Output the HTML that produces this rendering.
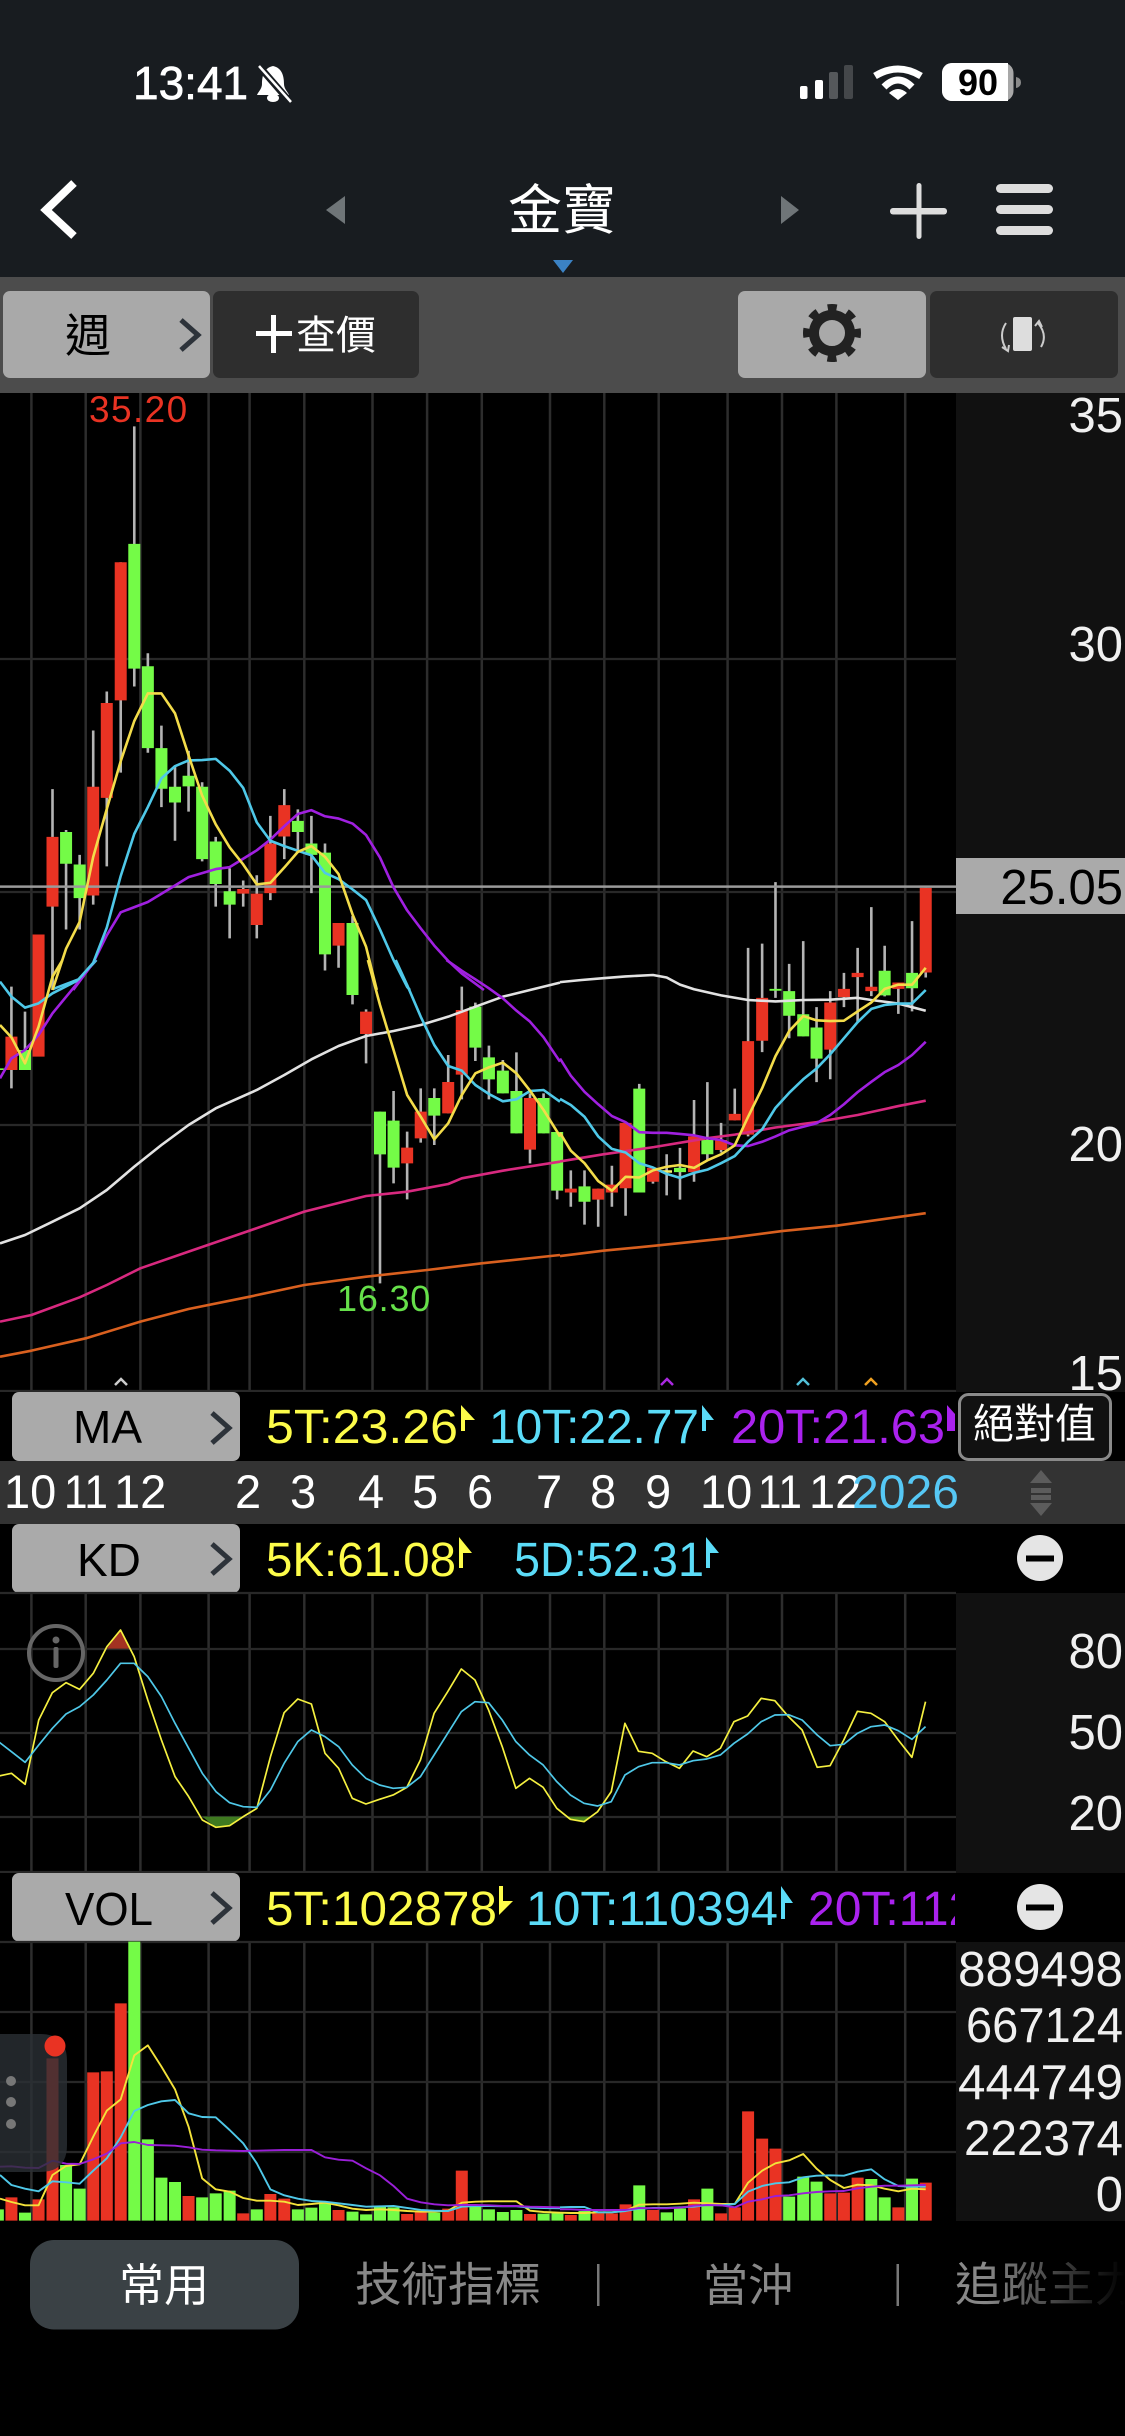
<!DOCTYPE html>
<html>
<head>
<meta charset="utf-8">
<title>金寶</title>
<style>
html,body{margin:0;padding:0;background:#000;width:1125px;height:2436px;overflow:hidden}
svg{display:block;font-family:"Liberation Sans","Noto Sans CJK TC",sans-serif}
path,polyline{vector-effect:non-scaling-stroke}
.l{fill:none;stroke-linejoin:round}
</style>
</head>
<body>
<svg width="1125" height="2436" viewBox="0 0 1125 2436" xmlns="http://www.w3.org/2000/svg">
<rect width="1125" height="2436" fill="#000"/>
<rect width="1125" height="277" fill="#181c20"/>
<rect y="277" width="1125" height="116" fill="#4c4c4c"/>

<!-- status bar -->
<text x="133" y="99" font-size="46" fill="#fff" stroke="#fff" stroke-width=".7">13:41</text>
<path d="M273 66C263 68 262 78 262 84C262 89 258 92 257 95H289C288 92 284 89 284 84C284 78 283 68 273 66Z" fill="#fff"/>
<ellipse cx="273" cy="98" rx="6" ry="4" fill="#fff"/>
<path d="M258 65L291 103" stroke="#181c20" stroke-width="7" fill="none"/>
<path d="M259 66L291 102" stroke="#fff" stroke-width="2.500" fill="none"/>
<rect x="800" y="86" width="7.500" height="13" rx="2" fill="#fff"/>
<rect x="815" y="80" width="8" height="19" rx="2" fill="#fff"/>
<rect x="829" y="72" width="9" height="27" rx="2" fill="#55585b"/>
<rect x="844" y="65" width="9" height="34" rx="2" fill="#44474a"/>
<path d="M875 76Q898 62 921 76M884 87Q898 73 912 87" fill="none" stroke="#fff" stroke-width="7"/>
<path d="M889 93Q898 85 907 93L898 100Z" fill="#fff"/>
<rect x="942" y="63" width="71.500" height="38" rx="10" fill="#a8a8a8"/>
<path d="M952 63H1008V101H952A10 10 0 0 1 942 91V73A10 10 0 0 1 952 63Z" fill="#fff"/>
<path d="M1016 77Q1021 78 1021 82.500Q1021 87 1016 88Z" fill="#8a8a8a"/>
<text x="958" y="95" font-size="36" font-weight="700" fill="#000">90</text>

<!-- nav bar -->
<path d="M74 183L46 210L74 236" fill="none" stroke="#fff" stroke-width="8"/>
<path d="M345 196V224L326 210Z" fill="#6f7578"/>
<path d="M781 196V224L799 210Z" fill="#6f7578"/>
<text x="508" y="229" font-size="54" fill="#fff">金寶</text>
<path d="M553 260H573L563 273Z" fill="#3b82c4"/>
<rect x="916.500" y="183" width="5" height="56" rx="2.500" fill="#ddd"/>
<rect x="890" y="208" width="57" height="6.500" rx="3" fill="#ddd"/>
<rect x="996" y="184" width="57" height="9" rx="4.500" fill="#ddd"/>
<rect x="996" y="205" width="57" height="9" rx="4.500" fill="#ddd"/>
<rect x="996" y="226" width="57" height="9" rx="4.500" fill="#ddd"/>

<!-- toolbar -->
<rect x="3" y="291" width="207" height="87" rx="7" fill="#a9a9a9"/>
<rect x="213" y="291" width="206" height="87" rx="7" fill="#2e2e2e"/>
<rect x="738" y="291" width="188" height="87" rx="7" fill="#a9a9a9"/>
<rect x="930" y="291" width="188" height="87" rx="7" fill="#2e2e2e"/>
<text x="65" y="352" font-size="46" fill="#000">週</text>
<path d="M181 320L198 335L181 350" fill="none" stroke="#2d333a" stroke-width="5"/>
<rect x="256" y="331" width="36" height="5" fill="#fff"/>
<rect x="271" y="315" width="5" height="38" fill="#fff"/>
<text x="296" y="349" font-size="40" fill="#fff">查價</text>
<circle cx="832" cy="333" r="18" fill="none" stroke="#222" stroke-width="10"/>
<circle cx="832" cy="333" r="25.500" fill="none" stroke="#222" stroke-width="7" stroke-dasharray="9 11.030" stroke-dashoffset="4.500"/>
<rect x="1013" y="317" width="19" height="34" rx="2" fill="#ddd"/>
<path d="M1006 323Q998 335 1006 349M1038 323Q1048 335 1041 347" fill="none" stroke="#ccc" stroke-width="2"/>
<path d="M1002 347L1008 351L1009 345M1035 326L1039 321L1042 327" fill="none" stroke="#ccc" stroke-width="2"/>

<!-- chart backgrounds -->
<rect y="393" width="956" height="1828" fill="#000"/>
<!-- vertical grid -->
<path d="M31.400 393V2221M85.700 393V2221M140.400 393V2221M208.600 393V2221M249.600 393V2221M304.300 393V2221M372.500 393V2221M427.100 393V2221M481.800 393V2221M550 393V2221M604.300 393V2221M658.700 393V2221M727.600 393V2221M782 393V2221M836.400 393V2221M905.200 393V2221" stroke="#2d2d2d" stroke-width="2.500" fill="none"/>
<!-- horizontal grid -->
<path d="M0 659H956M0 892H956M0 1125H956M0 1391H956M0 1649H956M0 1733H956M0 1817H956M0 2012H956M0 2082H956M0 2152H956" stroke="#282828" stroke-width="2.200" fill="none"/>

<!-- MAIN CHART: wicks -->
<g fill="none" stroke="#b4b4b4" stroke-width="2.600">
<g transform="translate(0 390) scale(.357143 .38265)"><path d="M147 1043V1568M185 1150V1410M223 1215V1410M261 890V1345M299 788V1245M338 450V1000M376 95V775M414 688V948M452 877V1090M490 985V1178M528 943V1102M566 1025V1232M604 1168V1350M643 1250V1433M681 1282V1350M719 1268V1433M757 1113V1333M796 1043V1226M834 1096V1210M872 1113V1315M910 1185V1517M948 1393V1510M987 1375V1568"/></g>
<g transform="translate(0 960) scale(.357143 .33333)"><path d="M32 80V385M70 155V330M147 0V70M987 0V133M1025 148V310M1064 455V970M1102 393V670M1140 515V718M1178 385V548M1216 385V555M1255 285V460M1293 80V418M1331 128V303M1369 257V418M1408 300V400M1446 277V520M1484 400V610M1522 400V520M1560 516V718"/></g>
<g transform="translate(560 840) scale(.36033 .35714)"><path d="M30 925V1027M68 925V1077M106 976V1083M144 912V1027M182 792V1052M220 683V987M258 918V962M296 880V995M333 862V1007M372 728V957M409 678V895M447 792V875M485 696V785M522 302V830M561 290V594M598 118V442M636 347V555M675 283V550M712 468V678M750 423V670M788 372V468M826 302V510M864 188V437M901 296V438M939 399V487M977 227V480M1015 134V385"/></g>
</g>
<!-- bodies green -->
<g fill="none" stroke="#74fb47" stroke-width="12">
<g transform="translate(0 390) scale(.357143 .38265)"><path d="M185 1155V1238M223 1240V1328M376 402V728M414 722V936M452 936V1042M490 1037V1078M528 1008V1036M566 1037V1226M604 1180V1291M643 1310V1345M834 1126V1155M872 1185V1215M910 1209V1475M987 1393V1568"/></g>
<g transform="translate(0 960) scale(.357143 .33333)"><path d="M-6 325V330M70 270V330M987 0V105M1064 455V583M1102 482V623M1216 414V467M1331 140V263M1369 292V358M1408 332V400M1446 393V520M1522 414V520M1560 516V692"/></g>
<g transform="translate(560 840) scale(.36033 .35714)"><path d="M68 970V1013M220 696V987M333 918V930M409 840V880M598 417V422M636 423V492M675 488V550M712 525V612M901 366V435M977 372V415"/></g>
</g>
<!-- bodies red -->
<g fill="none" stroke="#e93323" stroke-width="12">
<g transform="translate(0 390) scale(.357143 .38265)"><path d="M108 1423V1568M147 1168V1350M261 1037V1321M299 818V1066M338 450V811M681 1304V1316M719 1316V1398M757 1185V1315M796 1085V1167M948 1393V1452"/></g>
<g transform="translate(0 960) scale(.357143 .33333)"><path d="M32 230V330M108 0V290M1025 155V222M1140 563V610M1178 455V535M1255 366V460M1293 150V344M1484 414V569"/></g>
<g transform="translate(560 840) scale(.36033 .35714)"><path d="M30 976V987M106 976V1007M144 965V987M182 792V975M258 918V957M372 830V930M447 840V868M485 767V785M522 563V825M561 442V562M750 455V587M788 417V440M826 372V384M864 411V423M939 399V417M1015 134V371"/></g>
</g>
<path d="M661 1171.500H672" stroke="#f4f06a" stroke-width="2.500" fill="none"/>
<!-- price line -->
<path d="M0 886.600H956" stroke="#9a9a9a" stroke-width="2.500" fill="none"/>

<!-- MA lines -->
<g class="l" stroke-width="2.600">
<g transform="translate(0 960) scale(.357143 .33333)">
<path class="l" stroke="#d9601f" d="M0 1190 88 1172 240 1135 393 1085 528 1047 699 1010 852 975 1025 950 1196 930 1349 910 1568 885"/>
<path class="l" stroke="#d8297f" d="M0 1085 88 1065 223 1012 299 975 393 925 528 875 699 812 852 755 1025 708 1140 695 1255 672 1293 655 1408 632 1568 605"/>
<path class="l" stroke="#e2e2e2" d="M0 850 70 825 147 785 223 745 299 690 376 620 452 555 528 495 604 445 719 390 796 345 872 298 948 258 1025 228 1102 213 1178 195 1255 170 1331 140 1408 110 1484 90 1568 68"/>
<path class="l" stroke="#a020e0" d="M0 355 32 295 70 270 108 225 147 160 220 65 268 0M1250 0 1293 32 1331 58 1369 85 1408 115 1446 152 1484 185 1522 232 1568 305"/>
<path class="l" stroke="#4fc8e8" d="M0 65 32 110 70 143 108 130 147 100 220 60 270 0M1108 0 1140 75 1178 170 1216 255 1255 318 1293 332 1331 375 1369 402 1408 424 1446 418 1484 393 1522 390 1568 425"/>
<path class="l" stroke="#f3dc4a" d="M0 195 32 232 70 310 108 200 147 50 175 0M1030 0 1064 135 1102 270 1140 405 1178 470 1216 538 1255 490 1293 405 1331 340 1369 322 1408 308 1446 340 1484 392 1522 450 1560 515 1568 530"/>
</g>
<g transform="translate(0 390) scale(.357143 .38265)">
<path class="l" stroke="#a020e0" d="M205 1568 261 1497 299 1425 338 1365 414 1338 490 1295 528 1273 604 1252 643 1247 719 1203 757 1175 796 1140 834 1108 872 1098 910 1114 948 1120 987 1133 1025 1163 1064 1222 1102 1300 1140 1360 1178 1407 1216 1452 1255 1492 1293 1525 1355 1568"/>
<path class="l" stroke="#4fc8e8" d="M150 1565 220 1540 261 1497 299 1405 338 1270 376 1160 414 1090 452 1015 490 983 528 968 566 967 604 964 643 995 681 1040 719 1130 757 1178 796 1192 834 1204 872 1216 910 1262 948 1278 987 1305 1025 1333 1064 1410 1102 1490 1140 1560 1148 1568"/>
<path class="l" stroke="#f3dc4a" d="M147 1568 185 1460 223 1390 261 1220 299 1095 338 970 376 865 414 793 452 793 490 845 528 955 566 1060 604 1135 643 1195 681 1240 719 1292 757 1288 796 1248 834 1207 872 1192 910 1220 948 1265 987 1370 1025 1455 1055 1568"/>
</g>
<g transform="translate(560 840) scale(.36033 .35714)">
<path class="l" stroke="#d9601f" d="M0 1165 120 1150 274 1135 465 1115 616 1095 767 1080 958 1053 1015 1045"/>
<path class="l" stroke="#d8297f" d="M0 900 120 880 260 860 409 835 485 825 598 805 712 790 826 770 939 745 1015 730"/>
<path class="l" stroke="#e2e2e2" d="M0 398 60 392 120 387 182 382 258 378 296 385 333 405 372 418 447 435 522 448 598 452 675 448 750 447 826 442 864 448 939 458 1015 478"/>
<path class="l" stroke="#a020e0" d="M0 612 30 660 68 705 106 740 144 773 182 790 220 818 258 820 296 820 333 823 372 827 409 835 447 840 485 855 522 857 561 845 598 830 636 813 675 803 712 793 750 770 788 740 826 706 864 677 901 650 939 630 977 602 1015 565"/>
<path class="l" stroke="#4fc8e8" d="M0 725 30 742 68 775 106 830 144 865 182 875 220 905 258 917 296 935 333 946 372 932 409 923 447 905 485 885 522 845 561 810 598 750 636 708 675 670 712 640 750 600 788 555 826 510 864 473 901 462 939 458 977 458 1015 420"/>
<path class="l" stroke="#f3dc4a" d="M0 820 30 870 68 905 106 955 144 982 182 943 220 945 258 925 296 915 333 910 372 918 409 897 447 880 485 855 522 775 561 695 598 605 636 535 675 493 712 505 750 507 788 506 826 480 864 455 901 417 939 405 977 405 1015 358"/>
</g>
</g>
<text x="89" y="422" font-size="37" fill="#e93323" letter-spacing="1.400">35.20</text>
<text x="337" y="1311" font-size="36" fill="#66e04a" letter-spacing=".8">16.30</text>
<path d="M115 1385L121 1379L127 1385" fill="none" stroke="#ccc" stroke-width="2.500"/>
<path d="M661 1385L667 1379L673 1385" fill="none" stroke="#a828e0" stroke-width="2.500"/>
<path d="M797 1385L803 1379L809 1385" fill="none" stroke="#52c0d8" stroke-width="2.500"/>
<path d="M865 1385L871 1379L877 1385" fill="none" stroke="#f0a020" stroke-width="2.500"/>

<!-- right panel main -->
<rect x="956" y="393" width="169" height="999" fill="#111"/>
<rect x="956" y="858" width="169" height="56" fill="#aaa"/>
<g font-size="49" fill="#f0f0f0" text-anchor="end">
<text x="1123" y="432">35</text>
<text x="1123" y="661">30</text>
<text x="1123" y="1161">20</text>
<text x="1123" y="1390">15</text>
<text x="1123" y="904" fill="#000" font-size="49">25.05</text>
</g>

<!-- MA row -->
<rect y="1392" width="1125" height="69" fill="#000"/>
<rect x="12" y="1392" width="228" height="69" rx="7" fill="#aaa"/>
<text x="73" y="1443" font-size="46" fill="#000">MA</text>
<path d="M212 1413L229 1428L212 1443" fill="none" stroke="#2d333a" stroke-width="5"/>
<g font-size="48">
<text x="266" y="1443" fill="#fdfc4a" textLength="192" lengthAdjust="spacingAndGlyphs">5T:23.26</text>
<text x="489" y="1443" fill="#5bdcf8" textLength="210" lengthAdjust="spacingAndGlyphs">10T:22.77</text>
<text x="731" y="1443" fill="#aa22ee" textLength="214" lengthAdjust="spacingAndGlyphs">20T:21.63</text>
</g>
<path d="M461 1405L475 1420H465V1431H461Z" fill="#fdfc4a"/>
<path d="M702 1405L714 1420H706V1431H702Z" fill="#5bdcf8"/>
<path d="M947 1405L955 1414V1431H947Z" fill="#aa22ee"/>
<rect x="956" y="1392" width="169" height="69" fill="#000"/>
<rect x="959.500" y="1394.500" width="151" height="65" rx="9" fill="#111" stroke="#8a8a8a" stroke-width="3"/>
<text x="973" y="1438" font-size="41" fill="#fff">絕對值</text>

<!-- date row -->
<rect y="1461" width="1125" height="63" fill="#333"/>
<g font-size="47" fill="#fff">
<text x="4" y="1508">10</text><text x="64" y="1508" textLength="44" lengthAdjust="spacingAndGlyphs">11</text><text x="114" y="1508">12</text>
<text x="235" y="1508">2</text><text x="290" y="1508">3</text><text x="358" y="1508">4</text>
<text x="412" y="1508">5</text><text x="467" y="1508">6</text><text x="536" y="1508">7</text>
<text x="590" y="1508">8</text><text x="645" y="1508">9</text>
<text x="700" y="1508">10</text><text x="758" y="1508" textLength="44" lengthAdjust="spacingAndGlyphs">11</text><text x="809" y="1508">12</text>
<text x="852" y="1508" fill="#56c8f5" textLength="107" lengthAdjust="spacingAndGlyphs">2026</text>
</g>
<path d="M1030 1483L1041 1470L1052 1483Z" fill="#5c5c5c"/>
<rect x="1031" y="1488" width="20" height="5" fill="#5c5c5c"/>
<rect x="1031" y="1495" width="20" height="5" fill="#5c5c5c"/>
<path d="M1030 1503H1052L1041 1516Z" fill="#5c5c5c"/>

<!-- KD row -->
<rect y="1524" width="1125" height="69" fill="#000"/>
<rect x="12" y="1524" width="228" height="69" rx="7" fill="#aaa"/>
<text x="77" y="1576" font-size="46" fill="#000">KD</text>
<path d="M212 1544L229 1559L212 1574" fill="none" stroke="#2d333a" stroke-width="5"/>
<text x="266" y="1576" font-size="48" fill="#fdfc4a" textLength="190" lengthAdjust="spacingAndGlyphs">5K:61.08</text>
<text x="514" y="1576" font-size="48" fill="#5bdcf8" textLength="190" lengthAdjust="spacingAndGlyphs">5D:52.31</text>
<path d="M459 1537L472 1553H463V1568H459Z" fill="#fdfc4a"/>
<path d="M706 1537L719 1553H710V1568H706Z" fill="#5bdcf8"/>
<circle cx="1040" cy="1558" r="23" fill="#e5e5e5"/>
<rect x="1026" y="1555.500" width="28" height="6" fill="#000"/>

<!-- KD chart -->
<rect x="956" y="1593" width="169" height="280" fill="#111"/>
<path d="M0 1593H956M0 1872H956" stroke="#282828" stroke-width="2.200" fill="none"/>
<g transform="translate(0 1380) scale(.71747 .33333)">
<path d="M149 806 168 750 180 806Z" fill="#a33222"/>
<path d="M282 1310 301 1342 320 1337 339 1310Z" fill="#3f7a20"/>
<path d="M790 1310 795 1318 814 1325 825 1310Z" fill="#4f8a20"/>
<path class="l" stroke="#f5f040" stroke-width="1.700" d="M-2 1188 16 1180 35 1213 54 1020 73 938 92 908 111 928 130 880 149 800 168 750 187 830 206 960 225 1080 244 1190 263 1250 282 1320 301 1342 320 1337 339 1310 358 1285 377 1130 396 998 415 957 434 972 453 1120 472 1165 491 1255 510 1272 529 1258 548 1245 567 1222 586 1140 605 1000 624 935 643 867 662 900 681 990 700 1100 719 1225 738 1195 757 1222 776 1285 795 1318 814 1325 833 1295 852 1235 871 1030 890 1114 909 1120 928 1145 947 1165 966 1113 985 1130 1004 1105 1023 1025 1042 1008 1061 955 1080 962 1099 1010 1118 1050 1139 1162 1157 1157 1176 1080 1195 994 1214 1000 1233 1025 1252 1080 1271 1132 1290 965"/>
<path class="l" stroke="#4fc8e8" stroke-width="1.700" d="M-2 1085 16 1115 35 1147 54 1095 73 1045 92 1002 111 980 130 945 149 900 168 850 187 850 206 890 225 950 244 1030 263 1105 282 1180 301 1235 320 1268 339 1280 358 1282 377 1230 396 1150 415 1085 434 1050 453 1070 472 1100 491 1155 510 1195 529 1215 548 1225 567 1222 586 1190 605 1125 624 1060 643 995 662 965 681 968 700 1020 719 1085 738 1125 757 1155 776 1205 795 1245 814 1270 833 1278 852 1265 871 1185 890 1160 909 1148 928 1148 947 1155 966 1142 985 1137 1004 1125 1023 1090 1042 1062 1061 1025 1080 1005 1099 1004 1118 1020 1139 1065 1157 1097 1176 1093 1195 1060 1214 1040 1233 1035 1252 1052 1271 1078 1290 1040"/>
</g>
<circle cx="56" cy="1653" r="27" fill="none" stroke="#666" stroke-width="4"/>
<circle cx="56" cy="1640" r="3.500" fill="#666"/>
<rect x="53.500" y="1647" width="5" height="21" rx="2" fill="#666"/>
<g font-size="49" fill="#f0f0f0" text-anchor="end">
<text x="1123" y="1668">80</text>
<text x="1123" y="1749">50</text>
<text x="1123" y="1830">20</text>
</g>

<!-- VOL row -->
<rect y="1873" width="1125" height="69" fill="#000"/>
<rect x="12" y="1873" width="228" height="68.500" rx="7" fill="#aaa"/>
<text x="65" y="1925" font-size="46" fill="#000" textLength="88" lengthAdjust="spacingAndGlyphs">VOL</text>
<path d="M212 1893L229 1908L212 1923" fill="none" stroke="#2d333a" stroke-width="5"/>
<text x="266" y="1925" font-size="48" fill="#fdfc4a" textLength="231" lengthAdjust="spacingAndGlyphs">5T:102878</text>
<text x="526" y="1925" font-size="48" fill="#5bdcf8" textLength="252" lengthAdjust="spacingAndGlyphs">10T:110394</text>
<text x="808" y="1925" font-size="48" fill="#aa22ee">20T:112</text>
<path d="M499 1886H503V1901H513L499 1915Z" fill="#fdfc4a"/>
<path d="M781 1886L793 1903H785V1919H781Z" fill="#5bdcf8"/>
<rect x="955" y="1873" width="170" height="69" fill="#000"/>
<circle cx="1040" cy="1907" r="23" fill="#e5e5e5"/>
<rect x="1026" y="1904.500" width="28" height="6" fill="#000"/>

<!-- VOL chart -->
<rect x="956" y="1942" width="169" height="279" fill="#111"/>
<path d="M0 1942H956" stroke="#282828" stroke-width="2.200" fill="none"/>
<g fill="none" stroke="#e93323" stroke-width="12">
<g transform="translate(0 1930) scale(.357143 .33333)"><path d="M32 802V872M108 808V872M147 385V872M261 427V872M299 424V872M338 220V872M528 798V872M681 850V872M757 792V872M796 806V872M948 840V872M1140 852V872M1178 845V872M1255 836V872M1293 722V872M1484 852V872"/></g>
<g transform="translate(560 1930) scale(.36033 .33333)"><path d="M30 855V872M106 850V872M144 850V872M182 823V872M258 840V872M372 808V872M447 850V872M485 832V872M522 544V872M561 626V872M598 656V872M750 790V872M788 788V872M826 743V872M939 832V872M1015 758V872"/></g>
</g>
<g fill="none" stroke="#74fb47" stroke-width="12">
<g transform="translate(0 1930) scale(.357143 .33333)"><path d="M-6 838V872M70 848V872M185 705V872M223 776V872M376 35V872M414 628V872M452 743V872M490 756V872M566 802V872M604 790V872M643 782V872M719 838V872M834 838V872M872 833V872M910 815V872M987 845V872M1025 853V872M1064 830V872M1102 832V872M1216 848V872M1331 830V872M1369 838V872M1408 846V872M1446 840V872M1522 851V872"/></g>
<g transform="translate(560 1930) scale(.36033 .33333)"><path d="M-7 848V872M68 843V872M220 766V872M296 847V872M333 835V872M409 776V872M636 800V872M675 740V872M712 755V872M864 747V872M901 802V872M977 746V872"/></g>
</g>
<g transform="translate(0 1930) scale(.357143 .33333)">
<path class="l" stroke="#f3e23a" stroke-width="1.900" d="M0 806 32 816 70 826 108 826 147 735 185 708 223 703 261 620 299 542 338 508 376 376 414 346 452 410 490 478 528 590 566 745 604 778 643 785 681 804 719 812 757 812 796 815 834 825 872 822 910 818 948 826 987 836 1025 840 1064 838 1102 840 1140 843 1178 845 1216 845 1255 842 1293 818 1331 815 1369 814 1408 814 1446 814 1484 842 1522 846 1568 848"/>
<path class="l" stroke="#4fc8e8" stroke-width="1.900" d="M0 735 32 765 70 776 108 784 147 754 185 757 223 761 261 722 299 685 338 622 376 543 414 525 452 514 490 510 528 550 566 561 604 562 643 600 681 640 719 700 757 778 796 796 834 806 872 813 910 815 948 820 987 825 1025 830 1064 829 1102 828 1140 834 1178 840 1216 842 1255 843 1293 830 1331 828 1369 828 1408 829 1446 829 1484 833 1522 834 1568 835"/>
<path class="l" stroke="#9a1fd8" stroke-width="1.900" d="M0 710 32 709 70 713 108 714 147 692 185 701 223 702 261 688 299 671 338 640 376 636 414 645 452 646 490 647 528 652 566 659 604 661 643 662 681 663 719 662 757 661 796 660 834 660 872 660 910 682 948 689 987 692 1025 715 1064 736 1102 768 1140 806 1178 817 1216 823 1255 826 1293 825 1331 825 1369 826 1408 828 1446 828 1484 830 1522 831 1568 832"/>
</g>
<g transform="translate(560 1930) scale(.36033 .33333)">
<path class="l" stroke="#f3e23a" stroke-width="1.900" d="M0 848 30 849 68 849 106 847 144 847 182 842 220 824 258 823 296 823 333 821 372 818 409 820 447 822 485 822 522 758 561 722 598 700 636 691 675 672 712 716 750 750 788 774 826 764 864 766 901 776 939 784 977 776 1015 778"/>
<path class="l" stroke="#4fc8e8" stroke-width="1.900" d="M0 832 30 831 68 831 106 847 144 847 182 843 220 836 258 834 296 834 333 832 372 830 409 825 447 826 485 822 522 785 561 768 598 760 636 757 675 742 712 737 750 736 788 737 826 725 864 718 901 748 939 768 977 770 1015 770"/>
<path class="l" stroke="#9a1fd8" stroke-width="1.900" d="M0 838 30 838 68 840 106 840 144 840 182 840 220 834 258 835 296 835 333 833 372 827 409 825 447 826 485 832 522 815 561 808 598 798 636 796 675 790 712 786 750 784 788 783 826 775 864 770 901 767 939 767 977 766 1015 765"/>
</g>
<g font-size="49" fill="#f0f0f0" text-anchor="end">
<text x="1123" y="1986" textLength="165" lengthAdjust="spacingAndGlyphs">889498</text>
<text x="1123" y="2042" textLength="157" lengthAdjust="spacingAndGlyphs">667124</text>
<text x="1123" y="2099" textLength="165" lengthAdjust="spacingAndGlyphs">444749</text>
<text x="1123" y="2155" textLength="159" lengthAdjust="spacingAndGlyphs">222374</text>
<text x="1123" y="2211">0</text>
</g>

<!-- floating handle -->
<path d="M0 2034H40Q67 2034 67 2061V2145Q67 2172 40 2172H0Z" fill="#2a3035" fill-opacity=".8"/>
<circle cx="55" cy="2046" r="10.500" fill="#e93323"/>
<circle cx="11" cy="2081" r="5" fill="#777"/>
<circle cx="11" cy="2102" r="5" fill="#777"/>
<circle cx="11" cy="2124" r="5" fill="#777"/>

<!-- bottom tabs -->
<rect y="2221" width="1125" height="215" fill="#000"/>
<rect x="30" y="2240" width="269" height="89.500" rx="24" fill="#3a4145"/>
<text x="119" y="2301" font-size="45" fill="#fff">常用</text>
<text x="355" y="2301" font-size="46.500" fill="#888">技術指標</text>
<rect x="597" y="2264" width="2.500" height="42" fill="#777"/>
<text x="703" y="2301" font-size="45" fill="#888">當沖</text>
<rect x="896.500" y="2264" width="2.500" height="42" fill="#777"/>
<text x="955" y="2301" font-size="46.500" fill="#888">追蹤主力</text>
<defs><linearGradient id="f" x1="0" x2="1" y1="0" y2="0"><stop offset="0" stop-color="#000" stop-opacity="0"/><stop offset="1" stop-color="#000"/></linearGradient></defs>
<rect x="985" y="2250" width="140" height="70" fill="url(#f)"/>
</svg>
</body>
</html>
